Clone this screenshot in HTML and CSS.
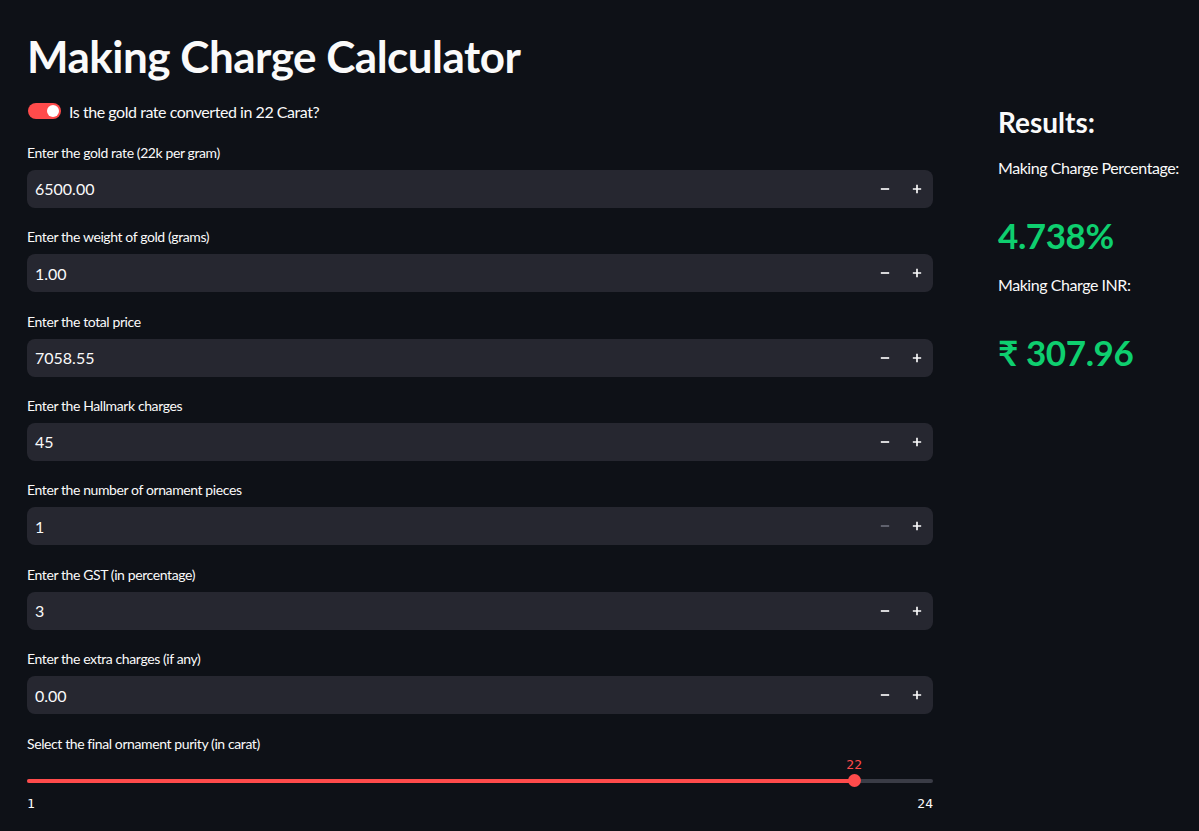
FILE: index.html
```html
<!DOCTYPE html>
<html>
<head>
<meta charset="utf-8">
<title>Making Charge Calculator</title>
<link rel="stylesheet" href="styles.css">
</head>
<body>
<div class="page">
  <div class="left">
    <h1 class="title">Making Charge Calculator</h1>
    <div class="toggle-row">
      <span class="toggle"><span class="knob"></span></span>
      <span class="toggle-label">Is the gold rate converted in 22 Carat?</span>
    </div>

    <div class="field">
      <div class="label">Enter the gold rate (22k per gram)</div>
      <div class="input">
        <span class="value">6500.00</span>
        <span class="step"><svg viewBox="0 0 12 12" width="12" height="12"><path d="M1 6h10" stroke="currentColor" stroke-width="2"/></svg></span>
        <span class="step"><svg viewBox="0 0 12 12" width="12" height="12"><path d="M1 6h10M6 1v10" stroke="currentColor" stroke-width="2"/></svg></span>
      </div>
    </div>

    <div class="field">
      <div class="label">Enter the weight of gold (grams)</div>
      <div class="input">
        <span class="value">1.00</span>
        <span class="step"><svg viewBox="0 0 12 12" width="12" height="12"><path d="M1 6h10" stroke="currentColor" stroke-width="2"/></svg></span>
        <span class="step"><svg viewBox="0 0 12 12" width="12" height="12"><path d="M1 6h10M6 1v10" stroke="currentColor" stroke-width="2"/></svg></span>
      </div>
    </div>

    <div class="field">
      <div class="label">Enter the total price</div>
      <div class="input">
        <span class="value">7058.55</span>
        <span class="step"><svg viewBox="0 0 12 12" width="12" height="12"><path d="M1 6h10" stroke="currentColor" stroke-width="2"/></svg></span>
        <span class="step"><svg viewBox="0 0 12 12" width="12" height="12"><path d="M1 6h10M6 1v10" stroke="currentColor" stroke-width="2"/></svg></span>
      </div>
    </div>

    <div class="field">
      <div class="label">Enter the Hallmark charges</div>
      <div class="input">
        <span class="value">45</span>
        <span class="step"><svg viewBox="0 0 12 12" width="12" height="12"><path d="M1 6h10" stroke="currentColor" stroke-width="2"/></svg></span>
        <span class="step"><svg viewBox="0 0 12 12" width="12" height="12"><path d="M1 6h10M6 1v10" stroke="currentColor" stroke-width="2"/></svg></span>
      </div>
    </div>

    <div class="field">
      <div class="label">Enter the number of ornament pieces</div>
      <div class="input">
        <span class="value">1</span>
        <span class="step disabled"><svg viewBox="0 0 12 12" width="12" height="12"><path d="M1 6h10" stroke="currentColor" stroke-width="2"/></svg></span>
        <span class="step"><svg viewBox="0 0 12 12" width="12" height="12"><path d="M1 6h10M6 1v10" stroke="currentColor" stroke-width="2"/></svg></span>
      </div>
    </div>

    <div class="field">
      <div class="label">Enter the GST (in percentage)</div>
      <div class="input">
        <span class="value">3</span>
        <span class="step"><svg viewBox="0 0 12 12" width="12" height="12"><path d="M1 6h10" stroke="currentColor" stroke-width="2"/></svg></span>
        <span class="step"><svg viewBox="0 0 12 12" width="12" height="12"><path d="M1 6h10M6 1v10" stroke="currentColor" stroke-width="2"/></svg></span>
      </div>
    </div>

    <div class="field">
      <div class="label">Enter the extra charges (if any)</div>
      <div class="input">
        <span class="value">0.00</span>
        <span class="step"><svg viewBox="0 0 12 12" width="12" height="12"><path d="M1 6h10" stroke="currentColor" stroke-width="2"/></svg></span>
        <span class="step"><svg viewBox="0 0 12 12" width="12" height="12"><path d="M1 6h10M6 1v10" stroke="currentColor" stroke-width="2"/></svg></span>
      </div>
    </div>

    <div class="field slider-field">
      <div class="label">Select the final ornament purity (in carat)</div>
      <div class="slider">
        <div class="track">
          <div class="fill" style="width: 91.3%"></div>
          <div class="thumb" style="left: 91.3%"><span class="thumb-value">22</span></div>
        </div>
        <div class="ticks"><span>1</span><span>24</span></div>
      </div>
    </div>
  </div>

  <div class="right">
    <h3 class="results-title">Results:</h3>
    <p class="result-label">Making Charge Percentage:</p>
    <h2 class="result-value">4.738%</h2>
    <p class="result-label">Making Charge INR:</p>
    <h2 class="result-value">₹ 307.96</h2>
  </div>
</div>
</body>
</html>
```

FILE: styles.css
```css
* { box-sizing: border-box; }

html, body {
  margin: 0;
  padding: 0;
  background: #0e1117;
  color: #fafafa;
  font-family: "Lato", "Noto Sans", sans-serif;
  height: 100%;
}

.page {
  display: flex;
  padding: 29px 0 0 27px;
  gap: 65px;
}

.left {
  width: 906px;
  flex: none;
  display: flex;
  flex-direction: column;
  gap: 17.4px;
}

.right {
  flex: 1;
  display: flex;
  flex-direction: column;
  padding-top: 77px;
}

.title {
  margin: 0;
  font-size: 44px;
  font-weight: 700;
  letter-spacing: -0.5px;
  line-height: 54px;
  height: 54px;
}

.toggle-row {
  display: flex;
  align-items: center;
  gap: 8px;
  height: 24px;
  margin-top: -1px;
}

.toggle {
  width: 33px;
  height: 16px;
  border-radius: 8px;
  background: #ff4b4b;
  display: flex;
  align-items: center;
  justify-content: flex-end;
  padding: 0 2px;
  margin-left: 1px;
}

.knob {
  width: 12px;
  height: 12px;
  border-radius: 50%;
  background: #ffffff;
}

.toggle-label {
  font-size: 16px;
  letter-spacing: -0.45px;
}

.field {
  display: flex;
  flex-direction: column;
}

.label {
  font-size: 14px;
  letter-spacing: -0.4px;
  line-height: 24px;
  height: 24px;
  margin-bottom: 5px;
}

.input {
  height: 38px;
  background: #262730;
  border-radius: 8px;
  display: flex;
  align-items: center;
  padding-left: 8px;
}

.value {
  flex: 1;
  font-size: 16px;
}

.step {
  width: 32px;
  height: 38px;
  display: flex;
  align-items: center;
  justify-content: center;
  color: #fafafa;
}

.step svg { width: 10px; height: 10px; }

.step.disabled { color: #6c6e7a; }

.slider {
  display: flex;
  flex-direction: column;
  padding-top: 18px;
}

.track {
  position: relative;
  height: 4px;
  border-radius: 2px;
  background: #3a3c46;
}

.fill {
  height: 4px;
  border-radius: 2px;
  background: #ff4b4b;
}

.thumb {
  position: absolute;
  top: 50%;
  width: 13px;
  height: 13px;
  margin: -6.5px 0 0 -6.5px;
  border-radius: 50%;
  background: #ff4b4b;
}

.thumb-value {
  position: absolute;
  bottom: 14px;
  left: 50%;
  transform: translateX(-50%);
  color: #ff4b4b;
  font-family: "DejaVu Sans Mono", "Liberation Mono", monospace;
  font-size: 13px;
  line-height: 16px;
}

.ticks {
  display: flex;
  justify-content: space-between;
  margin-top: 13px;
  font-family: "DejaVu Sans Mono", "Liberation Mono", monospace;
  font-size: 13px;
  line-height: 16px;
}

.results-title {
  margin: 0;
  font-size: 28px;
  font-weight: 700;
  line-height: 36px;
  height: 36px;
  margin-top: -2px;
}

.result-label {
  margin: 0;
  padding-top: 16px;
  font-size: 16px;
  letter-spacing: -0.45px;
  line-height: 24px;
}

.result-value {
  margin: 0;
  padding-top: 33px;
  font-size: 35px;
  font-weight: 700;
  letter-spacing: -0.4px;
  line-height: 44px;
  color: #0ecf6f;
}

.result-value + .result-label {
  padding-top: 16px;
}
```
